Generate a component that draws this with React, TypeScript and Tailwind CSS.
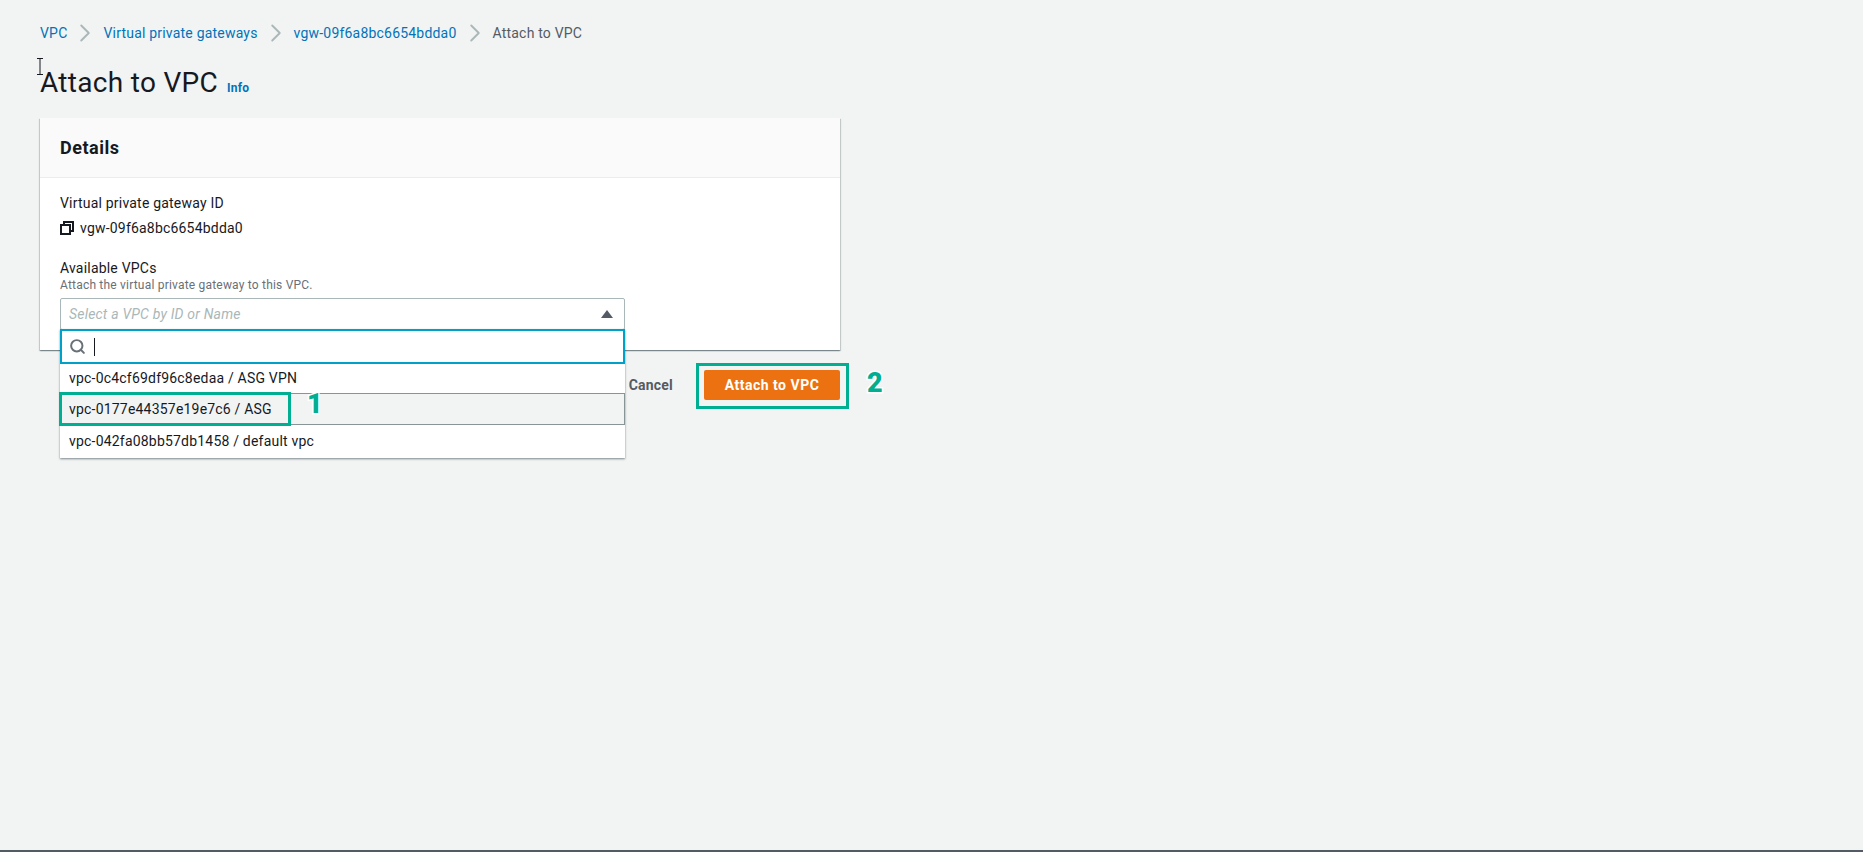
import { ChevronRight, Search } from "lucide-react";

const font = "font-['Roboto','Liberation_Sans',sans-serif]";
const badge =
  "absolute text-[27px] leading-[30px] font-black text-[#00ae91] [-webkit-text-stroke:3px_#ffffff] [paint-order:stroke_fill]";

function Crumb({ label, last }: { label: string; last?: boolean }) {
  return (
    <>
      <span className={last ? "text-[#545b64]" : "text-[#0073bb]"}>{label}</span>
      {!last && <ChevronRight className="w-[30px] h-[30px] text-[#aab7b8] mx-[3px]" strokeWidth={1.5} />}
    </>
  );
}

function CopyIcon() {
  return (
    <svg width="14" height="14" viewBox="0 0 14 14" fill="none" stroke="#16191f" strokeWidth="2" className="mr-[6px]">
      <rect x="1" y="4" width="9" height="9" />
      <path d="M4 4V1h9v9h-3" />
    </svg>
  );
}

function VpcDropdown() {
  return (
    <div className="absolute left-0 top-[31px] w-[565px] bg-white shadow-[0_1px_2px_rgba(0,28,36,0.5)] z-10">
      <div className="h-[35px] border-2 border-[#00a1c9] flex items-center pl-[7px]">
        <Search className="w-[17px] h-[17px] text-[#687078]" strokeWidth={2.8} />
        <span className="ml-[8px] w-px h-[18px] bg-[#16191f]" />
      </div>
      <div className="h-[29px] flex items-center pl-[9px]">vpc-0c4cf69df96c8edaa / ASG VPN</div>
      <div className="h-[32px] flex items-center pl-[8px] bg-[#f2f3f3] border border-[#879596]">
        vpc-0177e44357e19e7c6 / ASG
      </div>
      <div className="h-[33px] flex items-center pl-[9px]">vpc-042fa08bb57db1458 / default vpc</div>
    </div>
  );
}

export default function App() {
  return (
    <div className={`${font} relative min-h-[852px] bg-[#f2f3f3] border-b-2 border-[#545b64] text-[14px] tracking-[0.2px] text-[#16191f] px-[40px] pt-[23px]`}>
      <nav className="flex items-center h-[20px]">
        <Crumb label="VPC" />
        <Crumb label="Virtual private gateways" />
        <Crumb label="vgw-09f6a8bc6654bdda0" />
        <Crumb label="Attach to VPC" last />
      </nav>

      <div className="flex items-baseline mt-[20px]">
        <h1 className="text-[28px] leading-[40px] font-normal tracking-[0.3px]">Attach to VPC</h1>
        <span className="ml-[9px] text-[12px] font-bold text-[#0073bb]">Info</span>
      </div>

      {/* Details card */}
      <section className="mt-[15px] w-[800px] h-[232px] bg-white shadow-[0_1px_1px_rgba(0,28,36,0.3),1px_1px_1px_rgba(0,28,36,0.15),-1px_1px_1px_rgba(0,28,36,0.15)]">
        <div className="h-[60px] bg-[#fafafa] border-b border-[#eaeded] flex items-center px-[20px]">
          <h2 className="text-[18px] font-bold tracking-[0.5px]">Details</h2>
        </div>
        <div className="px-[20px] pt-[15px]">
          <div className="leading-[20px]">Virtual private gateway ID</div>
          <div className="flex items-center leading-[20px] mt-[5px]">
            <CopyIcon />
            vgw-09f6a8bc6654bdda0
          </div>
          <div className="leading-[20px] mt-[20px]">Available VPCs</div>
          <div className="text-[12px] leading-[14px] text-[#687078]">Attach the virtual private gateway to this VPC.</div>
          <div className="relative mt-[6px] w-[565px]">
            <div className="h-[32px] bg-white border border-[#aab7b8] rounded-[2px] flex items-center justify-between pl-[8px] pr-[11px]">
              <span className="italic text-[#aab7b8]">Select a VPC by ID or Name</span>
              <svg width="12" height="8" viewBox="0 0 12 8" fill="#545b64">
                <path d="M6 0l6 8H0z" />
              </svg>
            </div>
            <VpcDropdown />
            {/* annotation 1 */}
            <div className="absolute left-[-1px] top-[94px] w-[232px] h-[34px] border-[3px] border-[#00ae91] z-20" />
            <span className={`${badge} left-[247px] top-[91px] z-20`}>1</span>
          </div>
        </div>
      </section>

      {/* Actions */}
      <div className="w-[800px] flex justify-end items-center mt-[20px]">
        <span className="font-bold text-[#545b64] mr-[31px]">Cancel</span>
        <button className="w-[136px] h-[30px] bg-[#ec7211] rounded-[2px] text-white font-bold tracking-[0.5px]">Attach to VPC</button>
      </div>

      {/* annotation 2 */}
      <div className="absolute left-[696px] top-[363px] w-[153px] h-[46px] border-[3px] border-[#00ae91]" />
      <span className={`${badge} left-[867px] top-[368px]`}>2</span>

      {/* text cursor left in the capture */}
      <svg className="absolute left-[36px] top-[58px]" width="8" height="17" viewBox="0 0 8 17" fill="none" stroke="#16191f">
        <path d="M1 .5h6M4 .5v16M1 16.5h6" />
      </svg>
    </div>
  );
}
